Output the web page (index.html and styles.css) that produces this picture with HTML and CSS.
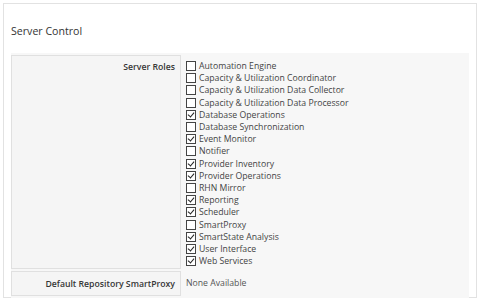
FILE: index.html
```html
<!DOCTYPE html>
<html lang="en">
<head>
  <meta charset="UTF-8">
  <title>Server Control</title>
  <link rel="stylesheet" href="styles.css">
</head>
<body>
  <div class="panel">
    <h3 class="panel-title">Server Control</h3>
    <table class="form-table">
      <tr>
        <td class="key">Server Roles</td>
        <td class="value">
          <ul class="roles">
            <li><span class="cb"></span>Automation Engine</li>
            <li><span class="cb"></span>Capacity &amp; Utilization Coordinator</li>
            <li><span class="cb"></span>Capacity &amp; Utilization Data Collector</li>
            <li><span class="cb"></span>Capacity &amp; Utilization Data Processor</li>
            <li><span class="cb on"></span>Database Operations</li>
            <li><span class="cb"></span>Database Synchronization</li>
            <li><span class="cb on"></span>Event Monitor</li>
            <li><span class="cb"></span>Notifier</li>
            <li><span class="cb on"></span>Provider Inventory</li>
            <li><span class="cb on"></span>Provider Operations</li>
            <li><span class="cb"></span>RHN Mirror</li>
            <li><span class="cb on"></span>Reporting</li>
            <li><span class="cb on"></span>Scheduler</li>
            <li><span class="cb"></span>SmartProxy</li>
            <li><span class="cb on"></span>SmartState Analysis</li>
            <li><span class="cb on"></span>User Interface</li>
            <li><span class="cb on"></span>Web Services</li>
          </ul>
        </td>
      </tr>
      <tr>
        <td class="key">Default Repository SmartProxy</td>
        <td class="value plain">None Available</td>
      </tr>
    </table>
  </div>
</body>
</html>
```

FILE: styles.css
```css
body { margin: 0; background: #fff; font-family: "Open Sans", sans-serif; color: #363636; }
.panel { margin: 3px; height: 295px; border: 1px solid #e2e2e2; box-sizing: border-box; padding: 0 7px; }
.panel-title { margin: 0; padding: 20px 0 17px; font-size: 10.6px; font-weight: 400; line-height: 14px; color: #333; }
.form-table { width: 100%; border-collapse: separate; border-spacing: 0 2px; margin-top: -2px; background: #f7f7f7; font-size: 8.7px; }
.form-table td { vertical-align: top; padding: 0; }
.key { width: 163px; background: #f5f5f5; border: 1px solid #e0e0e0; text-align: right; font-weight: 600; padding: 5px 5px 0 0 !important; }
.form-table tr:last-child .key { height: 17px; padding-top: 6px !important; }
.value { padding: 5px 0 2px 5px !important; color: #444; }
.value.plain { padding-top: 6px !important; color: #555; }
.roles { list-style: none; margin: 0; padding: 0; }
.roles li { display: flex; align-items: center; height: 12.2px; line-height: 12px; white-space: nowrap; }
.cb { width: 8px; height: 8px; border: 1px solid #444; background: #fff; margin-right: 3px; flex: none; position: relative; }
.cb.on::after { content: ""; position: absolute; left: 2px; top: 0; width: 3px; height: 5px; border: solid #222; border-width: 0 1.5px 1.5px 0; transform: rotate(40deg); }
```
